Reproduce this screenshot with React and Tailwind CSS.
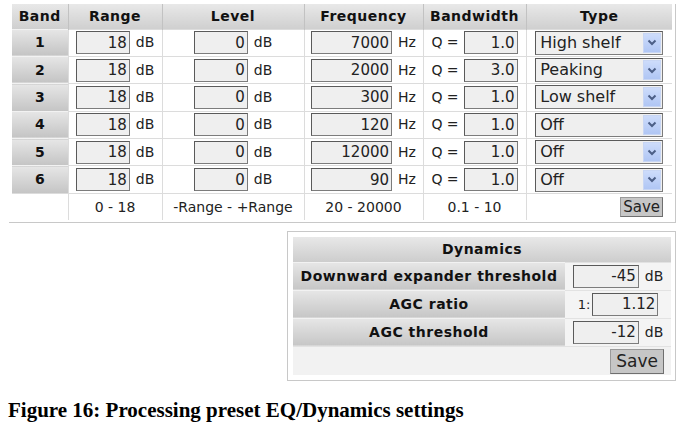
import React from "react"

const bands = [
  { id: 1, range: "18", level: "0", freq: "7000", q: "1.0", type: "High shelf" },
  { id: 2, range: "18", level: "0", freq: "2000", q: "3.0", type: "Peaking" },
  { id: 3, range: "18", level: "0", freq: "300", q: "1.0", type: "Low shelf" },
  { id: 4, range: "18", level: "0", freq: "120", q: "1.0", type: "Off" },
  { id: 5, range: "18", level: "0", freq: "12000", q: "1.0", type: "Off" },
  { id: 6, range: "18", level: "0", freq: "90", q: "1.0", type: "Off" },
]

const font = { fontFamily: '"DejaVu Sans", Verdana, sans-serif' }

const Field = ({ value, width }) => (
  <input
    readOnly
    value={value}
    className={`h-[23px] ${width} bg-[#efefef] border border-[#7c7c7c] border-t-[#5a5a5a] border-l-[#5a5a5a] text-right pr-[2px] text-[15px] leading-none text-[#222] outline-none`}
    style={font}
  />
)

const TypeSelect = ({ value }) => (
  <div className="flex items-center h-[24px] w-[128px] bg-[#efefef] border border-[#7c7c7c] border-t-[#5a5a5a] border-l-[#5a5a5a] mx-auto">
    <span className="flex-1 pl-[4px] text-[16px] leading-none text-[#222] text-left">{value}</span>
    <span className="flex items-center justify-center w-[18px] h-[20px] mr-[1px] bg-gradient-to-b from-[#cddcfb] to-[#b0c6f4] border border-[#c8d6f4]">
      <svg width="10" height="7" viewBox="0 0 10 7">
        <path d="M1.5 1.5 L5 5 L8.5 1.5" fill="none" stroke="#4c5f87" strokeWidth="2" />
      </svg>
    </span>
  </div>
)

const SaveButton = ({ big }) => (
  <button
    className={`${big ? "h-[25px] px-[5px] text-[17px]" : "h-[20px] px-[2px] text-[15px]"} bg-[#c6c6c6] border border-[#6f6f6f] border-t-[#9a9a9a] border-l-[#9a9a9a] leading-none text-[#222]`}
    style={font}
  >
    Save
  </button>
)

const headCell =
  "h-[25px] bg-gradient-to-b from-[#e8e8e8] to-[#cfcfcf] border-l border-[#c2c2c2] first:border-l-0 text-[14px] font-bold text-[#111] tracking-[0.5px]"
const bandCell =
  "bg-gradient-to-b from-[#e6e6e6] to-[#c4c4c4] border-t border-[#f2f2f2] text-[14px] font-bold text-[#111] text-center"
const dataCell = "border-t border-l border-[#dcdcdc] text-center"
const labelCell =
  "bg-gradient-to-b from-[#e6e6e6] to-[#c6c6c6] border-t border-[#f2f2f2] font-bold text-[#111] text-center tracking-[0.5px]"
const valueCell = "bg-[#f4f4f4] border-t border-[#e2e2e2]"

export default function App() {
  return (
    <div className="w-[688px] h-[430px] bg-white overflow-hidden text-[#222]" style={font}>
      <div className="ml-[9px] mt-[4px] w-[667px] pl-[3px] pr-[3px] pb-[2px] border-r border-b border-[#c8c8c8]">
        <table className="table-fixed border-collapse w-[660px]">
          <colgroup>
            <col className="w-[56px]" />
            <col className="w-[94px]" />
            <col className="w-[142px]" />
            <col className="w-[119px]" />
            <col className="w-[103px]" />
            <col className="w-[146px]" />
          </colgroup>
          <thead>
            <tr>
              <th className={headCell}>Band</th>
              <th className={headCell}>Range</th>
              <th className={headCell}>Level</th>
              <th className={headCell}>Frequency</th>
              <th className={headCell}>Bandwidth</th>
              <th className={headCell}>Type</th>
            </tr>
          </thead>
          <tbody>
            {bands.map((b) => (
              <tr key={b.id} className="h-[27.4px]">
                <td className={bandCell}>{b.id}</td>
                <td className={dataCell}>
                  <div className="flex items-center justify-center gap-[6px] text-[14px]">
                    <Field value={b.range} width="w-[54px]" />
                    <span>dB</span>
                  </div>
                </td>
                <td className={dataCell}>
                  <div className="flex items-center justify-center gap-[6px] text-[14px]">
                    <Field value={b.level} width="w-[54px]" />
                    <span>dB</span>
                  </div>
                </td>
                <td className={dataCell}>
                  <div className="flex items-center justify-center gap-[6px] text-[14px]">
                    <Field value={b.freq} width="w-[81px]" />
                    <span>Hz</span>
                  </div>
                </td>
                <td className={dataCell}>
                  <div className="flex items-center justify-center gap-[5px] text-[14px]">
                    <span>Q =</span>
                    <Field value={b.q} width="w-[54px]" />
                  </div>
                </td>
                <td className={dataCell}>
                  <TypeSelect value={b.type} />
                </td>
              </tr>
            ))}
            <tr className="h-[27px] text-[14px]">
              <td className="border-t border-[#dcdcdc]"></td>
              <td className={dataCell}>0 - 18</td>
              <td className={dataCell}>-Range - +Range</td>
              <td className={dataCell}>20 - 20000</td>
              <td className={dataCell}>0.1 - 10</td>
              <td className={`${dataCell} text-right pr-[9px]`}>
                <SaveButton />
              </td>
            </tr>
          </tbody>
        </table>
      </div>

      <div className="ml-[287px] mt-[8px] w-[389px] p-[5px] pr-[4px] border border-[#c8c8c8]">
        <table className="table-fixed border-collapse w-[378px]">
          <colgroup>
            <col className="w-[272px]" />
            <col className="w-[106px]" />
          </colgroup>
          <thead>
            <tr>
              <th
                colSpan={2}
                className="h-[25px] bg-gradient-to-b from-[#e8e8e8] to-[#cdcdcd] text-[14px] font-bold text-[#111] tracking-[0.5px]"
              >
                Dynamics
              </th>
            </tr>
          </thead>
          <tbody className="text-[14px]">
            <tr className="h-[28px]">
              <td className={labelCell}>Downward expander threshold</td>
              <td className={valueCell}>
                <div className="flex items-center justify-center gap-[6px]">
                  <Field value="-45" width="w-[66px]" />
                  <span>dB</span>
                </div>
              </td>
            </tr>
            <tr className="h-[28px]">
              <td className={labelCell}>AGC ratio</td>
              <td className={valueCell}>
                <div className="flex items-center justify-center gap-[2px]">
                  <span className="text-[13px]">1:</span>
                  <Field value="1.12" width="w-[66px]" />
                </div>
              </td>
            </tr>
            <tr className="h-[28px]">
              <td className={labelCell}>AGC threshold</td>
              <td className={valueCell}>
                <div className="flex items-center justify-center gap-[6px]">
                  <Field value="-12" width="w-[66px]" />
                  <span>dB</span>
                </div>
              </td>
            </tr>
            <tr className="h-[29px]">
              <td colSpan={2} className="bg-[#f2f2f2] border-t border-[#e2e2e2] text-right pr-[7px]">
                <SaveButton big />
              </td>
            </tr>
          </tbody>
        </table>
      </div>

      <p
        className="ml-[8px] mt-[19px] text-[21px] font-bold text-black leading-none"
        style={{ fontFamily: '"Liberation Serif", "Times New Roman", serif' }}
      >
        Figure 16: Processing preset EQ/Dynamics settings
      </p>
    </div>
  )
}
